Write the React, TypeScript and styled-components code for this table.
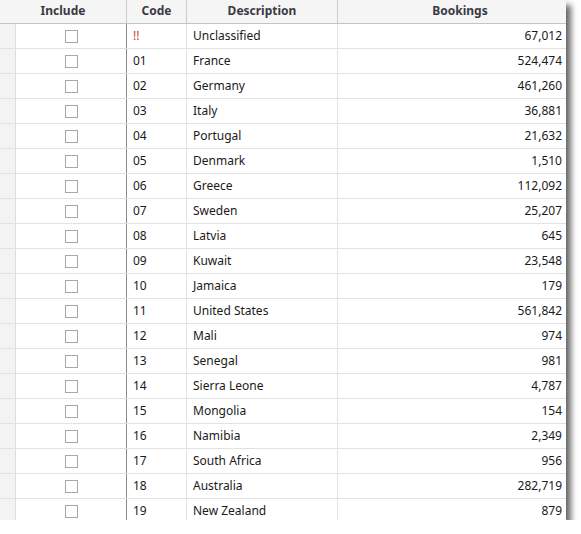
import React from "react";
import styled, { createGlobalStyle } from "styled-components";

const Global = createGlobalStyle`
  html, body { margin: 0; padding: 0; background: #ffffff; }
  body { font-family: "Noto Sans", "Open Sans", sans-serif; }
`;

const cols = "16px 111px 60px 151px 228px";

const Table = styled.div`
  width: 566px;
  height: 520px;
  overflow: hidden;
  background: #ffffff;
  box-shadow: 5px 5px 6px rgba(0, 0, 0, 0.6);
  font-size: 12px;
  color: #1a1a1a;
`;

const HeaderRow = styled.div`
  display: grid;
  grid-template-columns: 127px 60px 151px 228px;
  height: 23px;
  background: #f5f5f5;
  border-bottom: 1px solid #c4c4c4;
`;

const HeaderCell = styled.div<{ $shift?: number; $last?: boolean }>`
  display: flex;
  align-items: center;
  justify-content: center;
  font-weight: 700;
  color: #3a3a44;
  padding-left: ${(p) => p.$shift ?? 0}px;
  padding-bottom: 3px;
  border-right: ${(p) => (p.$last ? "none" : "1px solid #cccccc")};
`;

const Row = styled.div`
  display: grid;
  grid-template-columns: ${cols};
  height: 24px;
  border-bottom: 1px solid #e2e2e2;
`;

const Gutter = styled.div`
  background: #f3f3f3;
  border-right: 1px solid #dddddd;
`;

const CheckCell = styled.div`
  display: flex;
  align-items: center;
  justify-content: center;
  border-right: 1px solid #8a8a8a;
  padding-right: 1px;
`;

const Check = styled.div`
  width: 11px;
  height: 11px;
  border: 1px solid #a8a8a8;
  background: #ffffff;
  margin-left: 1px;
`;

const Cell = styled.div<{ $align?: "left" | "right"; $warn?: boolean; $last?: boolean }>`
  display: flex;
  align-items: center;
  justify-content: ${(p) => (p.$align === "right" ? "flex-end" : "flex-start")};
  padding: ${(p) => (p.$align === "right" ? "0 4px 2px 0" : "0 0 2px 6px")};
  border-right: ${(p) => (p.$last ? "none" : "1px solid #e2e2e2")};
  color: ${(p) => (p.$warn ? "#c3401c" : "#1a1a1a")};
  white-space: nowrap;
`;

const data: [string, string, string][] = [
  ["!!", "Unclassified", "67,012"],
  ["01", "France", "524,474"],
  ["02", "Germany", "461,260"],
  ["03", "Italy", "36,881"],
  ["04", "Portugal", "21,632"],
  ["05", "Denmark", "1,510"],
  ["06", "Greece", "112,092"],
  ["07", "Sweden", "25,207"],
  ["08", "Latvia", "645"],
  ["09", "Kuwait", "23,548"],
  ["10", "Jamaica", "179"],
  ["11", "United States", "561,842"],
  ["12", "Mali", "974"],
  ["13", "Senegal", "981"],
  ["14", "Sierra Leone", "4,787"],
  ["15", "Mongolia", "154"],
  ["16", "Namibia", "2,349"],
  ["17", "South Africa", "956"],
  ["18", "Australia", "282,719"],
  ["19", "New Zealand", "879"],
];

export default function App() {
  return (
    <>
      <Global />
      <Table>
        <HeaderRow>
          <HeaderCell>Include</HeaderCell>
          <HeaderCell>Code</HeaderCell>
          <HeaderCell>Description</HeaderCell>
          <HeaderCell $shift={16} $last>
            Bookings
          </HeaderCell>
        </HeaderRow>
        {data.map(([code, desc, val]) => (
          <Row key={code}>
            <Gutter />
            <CheckCell>
              <Check />
            </CheckCell>
            <Cell $warn={code === "!!"}>{code}</Cell>
            <Cell>{desc}</Cell>
            <Cell $align="right" $last>
              {val}
            </Cell>
          </Row>
        ))}
      </Table>
    </>
  );
}
